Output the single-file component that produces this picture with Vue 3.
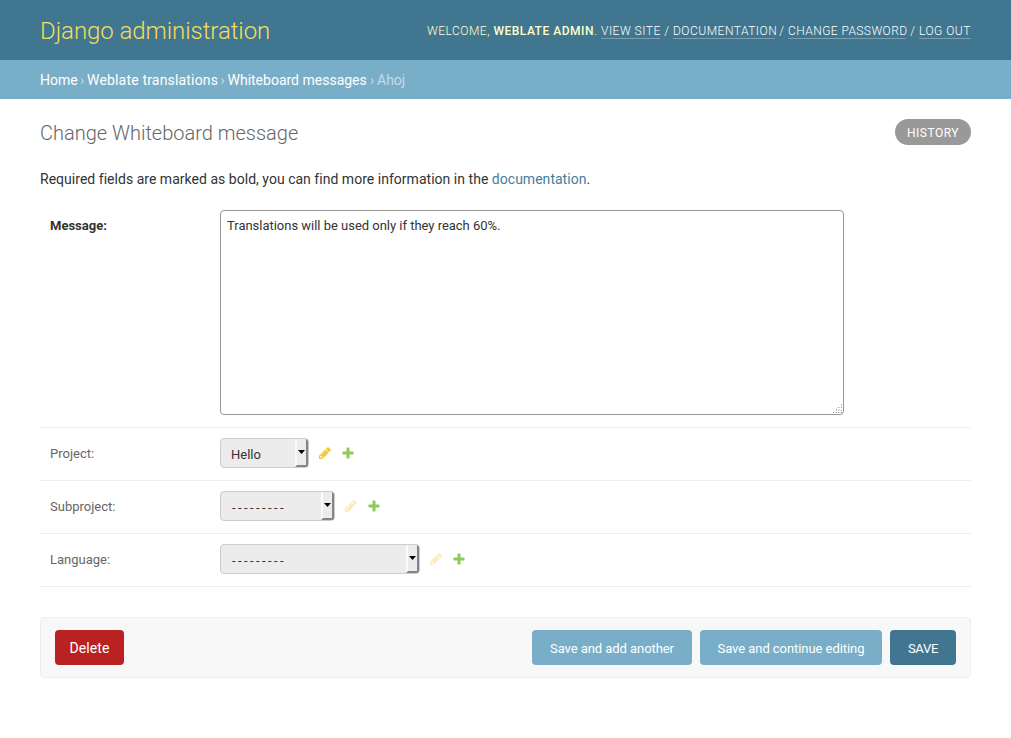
<script setup>
const fields = [
  { label: 'Project:', value: 'Hello', size: 'small', editable: true },
  { label: 'Subproject:', value: '---------', size: 'medium', editable: false },
  { label: 'Language:', value: '---------', size: 'large', editable: false },
]
</script>

<template>
  <div class="page">
    <header class="header">
      <h1 class="brand">Django administration</h1>
      <div class="tools">
        <span class="welcome">Welcome, <strong>Weblate Admin</strong>.</span>
        <a class="t1">View site</a><i>/</i><a class="t2">Documentation</a><i>/</i><a class="t3">Change password</a><i>/</i><a class="t4">Log out</a>
      </div>
    </header>
    <nav class="crumbs">
      <a class="c1">Home</a><i>›</i><a class="c2">Weblate translations</a><i>›</i><a class="c3">Whiteboard messages</a><i>›</i><span class="c4">Ahoj</span>
    </nav>
    <main class="content">
      <div class="heading">
        <h2>Change Whiteboard message</h2>
        <a class="history"><span>History</span></a>
      </div>
      <p class="help">Required fields are marked as bold, you can find more information in the <a>documentation</a>.</p>
      <div class="row first">
        <label class="label required">Message:</label>
        <div class="textarea">
          <span>Translations will be used only if they reach 60%.</span>
          <svg class="grip" width="10" height="10" viewBox="0 0 10 10" shape-rendering="crispEdges">
            <path fill="#999" d="M8 0h1v1h-1zM5 3h1v1h-1zM8 3h1v1h-1zM3 5h1v1h-1zM5 6h1v1h-1zM8 6h1v1h-1zM0 8h1v1h-1zM3 8h1v1h-1zM5 8h1v1h-1zM8 8h1v1h-1z" />
            <path fill="#ddd" d="M6 3h1v1h-1zM8 2h1v1h-1zM3 6h1v1h-1zM6 5h1v1h-1zM2 8h1v1h-1zM6 8h1v1h-1z" />
          </svg>
        </div>
      </div>
      <div v-for="f in fields" :key="f.label" class="row">
        <label class="label">{{ f.label }}</label>
        <div class="select" :class="f.size">
          <span class="value" :class="{ dashes: !f.editable }">{{ f.value }}</span>
          <span class="arrow"><svg width="7" height="4" viewBox="0 0 7 4"><path d="M0 0h7L3.5 4z" /></svg></span>
        </div>
        <svg class="pencil" :class="{ disabled: !f.editable }" width="14" height="14" viewBox="0 0 1792 1792">
          <path fill="#efb80b" d="M491 1536l91-91-235-235-91 91v107h128v128h107zm523-928q0-22-22-22-10 0-17 7l-542 542q-7 7-7 17 0 22 22 22 10 0 17-7l542-542q7-7 7-17zm-54-192l416 416-832 832h-416v-416zm683 96q0 53-37 90l-166 166-416-416 166-165q36-38 90-38 53 0 91 38l235 234q37 39 37 91z" />
        </svg>
        <svg class="plus" width="14" height="14" viewBox="0 0 1792 1792">
          <path fill="#70bf2b" d="M1600 796v192q0 40-28 68t-68 28h-416v416q0 40-28 68t-68 28h-192q-40 0-68-28t-28-68v-416h-416q-40 0-68-28t-28-68v-192q0-40 28-68t68-28h416v-416q0-40 28-68t68-28h192q40 0 68 28t28 68v416h416q40 0 68 28t28 68z" />
        </svg>
      </div>
      <div class="submit">
        <a class="btn delete">Delete</a>
        <a class="btn another">Save and add another</a>
        <a class="btn continue">Save and continue editing</a>
        <a class="btn save">SAVE</a>
      </div>
    </main>
  </div>
</template>

<style>
body { margin: 0; background: #fff; }
</style>

<style scoped>
.page { font-family: Roboto, "Liberation Sans", sans-serif; font-size: 14px; color: #333; height: 738px; overflow: hidden; white-space: nowrap; }
.page * { box-sizing: border-box; }
i { font-style: normal; }
.header { display: flex; justify-content: space-between; height: 60px; padding: 0 40px; background: #417690; color: #ffc; }
.brand { margin: 0; font-size: 24px; font-weight: 300; line-height: 62px; color: #f5dd5d; letter-spacing: -0.06px; }
.tools { display: flex; padding-top: 24px; font-size: 12px; font-weight: 300; line-height: 15px; letter-spacing: 0.5px; text-transform: uppercase; }
.tools strong { font-weight: 500; }
.tools a { height: 15px; color: #fff; border-bottom: 1px solid #7a9fb1; }
.tools i { width: 13px; padding-left: 1px; text-align: center; }
.welcome { width: 174px; }
.t1 { width: 59px; }
.t2 { width: 102px; }
.t3 { width: 118px; letter-spacing: 0.43px; }
.t4 { width: 52px; }
.crumbs { display: flex; height: 39px; padding-left: 40px; background: #79aec8; color: #c4dce8; line-height: 40px; }
.crumbs a { color: #fff; }
.crumbs i { width: 10px; text-align: center; }
.c1 { width: 37px; }
.crumbs .c2 { width: 130.5px; letter-spacing: 0.18px; }
.c3 { width: 139.5px; }
.content { padding: 20px 40px 0; }
.heading { display: flex; justify-content: space-between; height: 50px; }
h2 { margin: 0; font-size: 20px; font-weight: 300; line-height: 28px; color: #666; }
.history { width: 76px; height: 26px; border-radius: 13px; background: #999; color: #fff; font-size: 12px; line-height: 28px; text-align: center; text-transform: uppercase; letter-spacing: 0.5px; }
.help { margin: 0; height: 31px; line-height: 20px; letter-spacing: 0.025px; }
.help a { color: #447e9b; }
.row { display: flex; height: 53px; padding: 10px 0 0 10px; border-bottom: 1px solid #eee; }
.row.first { height: 228px; }
.label { width: 170px; font-size: 13px; line-height: 31px; color: #666; }
.required { font-weight: 700; color: #333; }
.textarea { position: relative; width: 624px; height: 205px; padding: 6px; border: 1px solid #999; border-radius: 4px; font-size: 13px; line-height: 18px; letter-spacing: -0.02px; }
.grip { position: absolute; right: 0; bottom: 0; }
.select { display: flex; justify-content: space-between; height: 30px; border: 1px solid #ccc; border-radius: 4px; background: #ececec; overflow: hidden; }
.small { width: 89px; }
.medium { width: 115px; }
.large { width: 200px; }
.value { padding-left: 10px; font-size: 13px; line-height: 31px; }
.dashes { padding-left: 11px; letter-spacing: 2.4px; }
.arrow { display: flex; align-items: center; justify-content: center; width: 13px; border-left: 2px solid #fafafa; border-right: 2px solid #858585; border-bottom: 2px solid #858585; }
.pencil { margin: 8px 0 0 9px; opacity: 0.8; }
.pencil.disabled { opacity: 0.28; }
.plus { margin: 8px 0 0 9px; opacity: 0.8; }
.submit { display: flex; gap: 8px; margin-top: 30px; height: 61px; padding: 12px 14px; border: 1px solid #eee; border-radius: 4px; background: #f8f8f8; }
.btn { height: 35px; border-radius: 4px; background: #79aec8; color: #fff; font-size: 13px; line-height: 37px; text-align: center; letter-spacing: -0.06px; }
.delete { width: 69px; margin-right: auto; background: #ba2121; font-size: 14px; letter-spacing: 0.1px; }
.another { width: 160px; }
.continue { width: 182px; }
.save { width: 66px; background: #417690; letter-spacing: -0.3px; }
</style>
